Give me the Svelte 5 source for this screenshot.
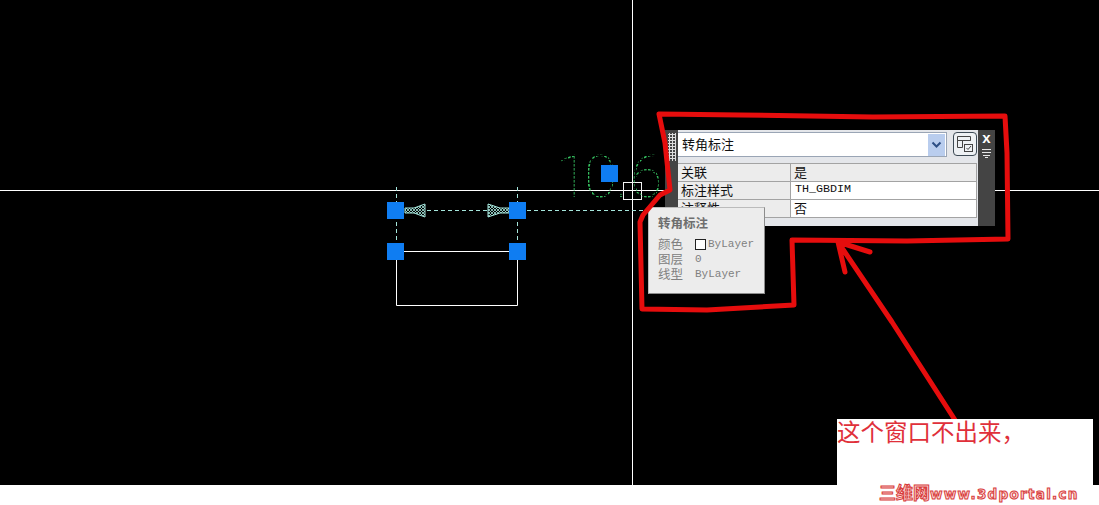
<script>
  const rows = [
    { label: "关联", value: "是", tone: "grey" },
    { label: "标注样式", value: "TH_GBDIM", tone: "latin" },
    { label: "注释性", value: "否", tone: "" },
  ];
  const grips = [
    [387, 202],
    [509, 202],
    [387, 243],
    [509, 243],
    [601, 165],
  ];
</script>

<div class="page">
  <div class="canvas">
    <svg class="drawing" width="1099" height="485" viewBox="0 0 1099 485">
      <defs>
        <pattern id="dots" width="4" height="4" patternUnits="userSpaceOnUse">
          <rect width="2.6" height="2.6" fill="#35c060" />
        </pattern>
        <pattern id="weave" width="3" height="3" patternUnits="userSpaceOnUse">
          <path d="M0 3 3 0M0 0 3 3" stroke="#a5e6dc" stroke-width="0.8" />
        </pattern>
      </defs>
      <path class="cross" d="M0 190.5H1099M632.5 0V485" />
      <path class="cross" d="M396.5 251.5H517.5M396.5 251.5V305.5H517.5V251.5" />
      <rect class="pick" x="623.5" y="182.5" width="18" height="17" />
      <path class="dash" d="M396.5 187V243M517.5 187V243M427 210.5H488M527 210.5H665" />
      <path class="hatch" d="M405 208H414L425 204V217L414 213H405ZM509 208H500L488 204V217L500 213H509Z" />
      <text class="dim" x="556 584 615 630" y="197">10.6</text>
      {#each grips as [x, y]}
        <rect class="grip" {x} {y} width="17" height="17" />
      {/each}
    </svg>

    <div class="panel">
      <div class="handle"></div>
      <div class="body">
        <div class="head">
          <div class="combo">
            <span>转角标注</span>
            <button class="drop" aria-label="展开">
              <svg width="11" height="8" viewBox="0 0 11 8"><path d="M1.5 1.5 5.5 5.5 9.5 1.5" /></svg>
            </button>
          </div>
          <button class="quick" aria-label="选择对象">
            <svg width="20" height="20" viewBox="0 0 20 20">
              <path class="win" d="M2.5 2.5H15.5V6.5H2.5ZM2.5 6.5H7.5V13.5H2.5ZM7.5 6.5H15.5" />
              <rect class="win" x="9.5" y="10.5" width="8" height="7" fill="#fff" />
              <path class="tick" d="M11.5 14 13 15.5 16 12" />
            </svg>
          </button>
        </div>
        <table>
          <tbody>
            {#each rows as r}
              <tr>
                <td class="name"><span>{r.label}</span></td>
                <td class="val {r.tone}"><span>{r.value}</span></td>
              </tr>
            {/each}
          </tbody>
        </table>
      </div>
      <div class="side">
        <span class="close">x</span>
        <svg width="11" height="10" viewBox="0 0 11 10"><path d="M1 1.5H10M1 4.5H10M2 7.5H9M4 9.5H7" /></svg>
      </div>
    </div>

    <div class="tip">
      <h4>转角标注</h4>
      <dl>
        <dt>颜色</dt>
        <dd><i class="swatch"></i>ByLayer</dd>
        <dt>图层</dt>
        <dd>0</dd>
        <dt>线型</dt>
        <dd>ByLayer</dd>
      </dl>
    </div>

    <svg class="marks" width="1099" height="485" viewBox="0 0 1099 485">
      <path
        class="red"
        d="M659 114 740 115 873 117 1005 116 1007 153 1008 239 907 241 792 240 794 305 707 310 642 309 640 222 643 215 660 195 670 190 665 143Z"
      />
      <path class="red" d="M955 420 892 322 838 242M838 242 870 252M838 242 845 272" />
    </svg>
  </div>

  <div class="note">这个窗口不出来，</div>
  <div class="mark"><span class="cn">三维网</span>www.3dportal.cn</div>
</div>

<style>
  :global(body) {
    margin: 0;
    background: #fff;
  }
  .page {
    position: relative;
    width: 1099px;
    height: 505px;
    overflow: hidden;
    background: #fff;
    font-family: "Noto Sans CJK SC", "Liberation Sans", sans-serif;
  }
  .canvas {
    position: relative;
    height: 485px;
    background: #000;
  }
  .drawing,
  .marks {
    position: absolute;
    inset: 0;
  }
  .marks {
    pointer-events: none;
  }
  .cross {
    fill: none;
    stroke: #fff;
    stroke-width: 1;
  }
  .pick {
    fill: none;
    stroke: #f4f4f4;
    stroke-width: 1;
  }
  .dash {
    fill: none;
    stroke: #a5e6dc;
    stroke-width: 1;
    stroke-dasharray: 4 3;
  }
  .hatch {
    fill: url(#weave);
    stroke: #a5e6dc;
    stroke-width: 1;
  }
  .dim {
    font-family: Roboto, "Liberation Sans", sans-serif;
    font-weight: 100;
    font-size: 60px;
    fill: url(#dots);
  }
  .grip {
    fill: #0f7df2;
  }
  .red {
    fill: none;
    stroke: #e60d0d;
    stroke-width: 5;
    stroke-linejoin: round;
    stroke-linecap: round;
  }

  .panel {
    position: absolute;
    left: 665px;
    top: 130px;
    width: 330px;
    height: 96px;
    display: flex;
    background: #444;
  }
  .handle {
    width: 8px;
    height: 28px;
    margin: 3px 2px 0 3px;
    background-image: radial-gradient(circle at 1.5px 1.5px, #ddd 1px, transparent 1.2px);
    background-size: 3px 3px;
  }
  .body {
    width: 300px;
    background: #e4e6ea;
    padding-top: 2px;
    box-sizing: border-box;
  }
  .head {
    display: flex;
    gap: 6px;
    height: 25px;
  }
  .combo {
    flex: 1;
    display: flex;
    align-items: center;
    justify-content: space-between;
    padding-left: 4px;
    background: #fff;
    border: 1px solid #9aa5b5;
    border-left: 0;
    font-size: 13px;
    color: #111;
  }
  .combo span {
    position: relative;
    top: -1px;
  }
  .drop {
    width: 17px;
    height: 22px;
    margin-right: 1px;
    padding: 0;
    border: 0;
    display: grid;
    place-items: center;
    background: #b9cdee;
  }
  .drop path {
    fill: none;
    stroke: #2d4f85;
    stroke-width: 2;
  }
  .quick {
    width: 24px;
    height: 24px;
    padding: 0;
    margin-right: 1px;
    display: grid;
    place-items: center;
    background: #eef1f4;
    border: 1px solid #3d4a55;
    border-radius: 4px;
  }
  .win {
    fill: none;
    stroke: #444;
  }
  .tick {
    fill: none;
    stroke: #444;
    stroke-width: 1;
  }
  table {
    width: 299px;
    margin-top: 6px;
    border-collapse: collapse;
    table-layout: fixed;
    font-size: 13px;
    color: #111;
  }
  td {
    height: 17px;
    padding: 0 0 0 3px;
    border: 1px solid #a3a3a3;
    line-height: 17px;
    overflow: hidden;
    white-space: nowrap;
  }
  td span {
    position: relative;
    top: -1px;
  }
  td.name {
    width: 109px;
    background: #ececec;
    border-left: 0;
  }
  td.val {
    background: #fff;
  }
  td.grey {
    background: #ececec;
  }
  td.latin {
    font-family: "Liberation Mono", monospace;
    font-size: 11.7px;
    padding-left: 4px;
  }
  .side {
    flex: 1;
    display: flex;
    flex-direction: column;
    align-items: center;
    gap: 3px;
    color: #fff;
  }
  .close {
    font: bold 15px/15px "Liberation Sans", sans-serif;
  }
  .side path {
    fill: none;
    stroke: #e8e8e8;
  }

  .tip {
    position: absolute;
    left: 648px;
    top: 207px;
    width: 117px;
    height: 87px;
    box-sizing: border-box;
    padding: 7px 0 0 9px;
    background: #ececec;
    border: 1px solid #8c8c8c;
    border-top-color: #bbb;
    border-left-color: #bbb;
    color: #808080;
    font-size: 12.5px;
  }
  h4 {
    margin: 0 0 5px;
    font-size: 12.5px;
    line-height: 16px;
    font-weight: 700;
    color: #6e6e6e;
  }
  dl {
    margin: 0;
    display: grid;
    grid-template-columns: 37px 1fr;
    line-height: 15px;
  }
  dd {
    position: relative;
    top: 1px;
    margin: 0;
    display: flex;
    align-items: center;
    font-family: "Liberation Mono", monospace;
    font-size: 11px;
  }
  .swatch {
    width: 9px;
    height: 9px;
    margin-right: 2px;
    background: #fff;
    border: 1px solid #222;
  }

  .note {
    position: absolute;
    left: 837px;
    top: 419px;
    width: 256px;
    height: 86px;
    background: #fff;
    color: #e0303a;
    font-size: 23.5px;
    line-height: 25px;
  }
  .mark {
    position: absolute;
    left: 879px;
    top: 483px;
    line-height: 18px;
    font-family: "DejaVu Sans", sans-serif;
    font-size: 13.5px;
    font-weight: 700;
    letter-spacing: 1.3px;
    white-space: nowrap;
    color: #fbd9d6;
    -webkit-text-stroke: 1px #d83c3c;
  }
  .cn {
    font-family: "Noto Sans CJK SC", sans-serif;
    font-size: 17px;
    letter-spacing: 0;
  }
</style>
